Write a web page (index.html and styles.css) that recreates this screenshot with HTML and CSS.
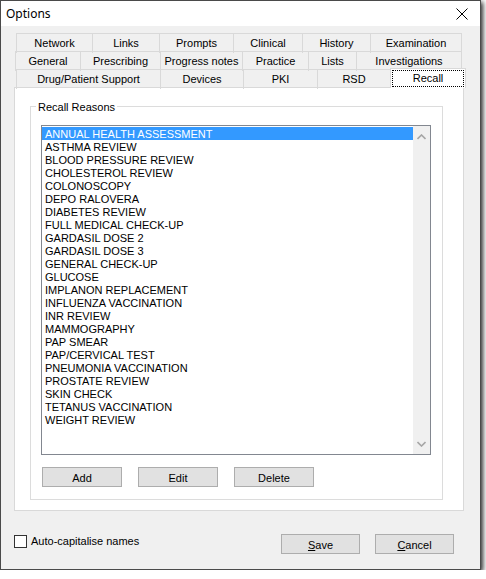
FILE: index.html
```html
<!DOCTYPE html>
<html lang="en">
<head>
    <meta charset="utf-8">
    <title>Options</title>
    <link rel="stylesheet" href="styles.css">
</head>
<body>
    <div class="window">
        <div class="title-bar">
            <span class="title">Options</span>
            <svg class="close" width="12" height="12" viewBox="0 0 12 12">
                <path d="M0.5 0.5 L11.5 11.5 M11.5 0.5 L0.5 11.5" stroke="#000" stroke-width="1"/>
            </svg>
        </div>
        <div class="dialog-body">
            <div class="tabs">
                <div class="tab-row row-1">
                    <div class="tab">Network</div>
                    <div class="tab">Links</div>
                    <div class="tab">Prompts</div>
                    <div class="tab">Clinical</div>
                    <div class="tab">History</div>
                    <div class="tab">Examination</div>
                </div>
                <div class="tab-row row-2">
                    <div class="tab">General</div>
                    <div class="tab">Prescribing</div>
                    <div class="tab">Progress notes</div>
                    <div class="tab">Practice</div>
                    <div class="tab">Lists</div>
                    <div class="tab">Investigations</div>
                </div>
                <div class="tab-row row-3">
                    <div class="tab">Drug/Patient Support</div>
                    <div class="tab">Devices</div>
                    <div class="tab">PKI</div>
                    <div class="tab">RSD</div>
                    <div class="tab active"><span class="focus">Recall</span></div>
                </div>
                <div class="tab-panel">
                    <div class="group">
                        <div class="group-title">Recall Reasons</div>
                        <div class="listbox">
                            <ul class="items">
                                <li class="selected">ANNUAL HEALTH ASSESSMENT</li>
                                <li>ASTHMA REVIEW</li>
                                <li>BLOOD PRESSURE REVIEW</li>
                                <li>CHOLESTEROL REVIEW</li>
                                <li>COLONOSCOPY</li>
                                <li>DEPO RALOVERA</li>
                                <li>DIABETES REVIEW</li>
                                <li>FULL MEDICAL CHECK-UP</li>
                                <li>GARDASIL DOSE 2</li>
                                <li>GARDASIL DOSE 3</li>
                                <li>GENERAL CHECK-UP</li>
                                <li>GLUCOSE</li>
                                <li>IMPLANON REPLACEMENT</li>
                                <li>INFLUENZA VACCINATION</li>
                                <li>INR REVIEW</li>
                                <li>MAMMOGRAPHY</li>
                                <li>PAP SMEAR</li>
                                <li>PAP/CERVICAL TEST</li>
                                <li>PNEUMONIA VACCINATION</li>
                                <li>PROSTATE REVIEW</li>
                                <li>SKIN CHECK</li>
                                <li>TETANUS VACCINATION</li>
                                <li>WEIGHT REVIEW</li>
                            </ul>
                            <div class="scrollbar">
                                <svg width="9" height="6" viewBox="0 0 9 6">
                                    <path d="M0.5 5 L4.5 1 L8.5 5" fill="none" stroke="#a6a6a6" stroke-width="1.6"/>
                                </svg>
                                <svg width="9" height="6" viewBox="0 0 9 6">
                                    <path d="M0.5 1 L4.5 5 L8.5 1" fill="none" stroke="#a6a6a6" stroke-width="1.6"/>
                                </svg>
                            </div>
                        </div>
                        <div class="list-buttons">
                            <button class="btn">Add</button>
                            <button class="btn">Edit</button>
                            <button class="btn">Delete</button>
                        </div>
                    </div>
                </div>
            </div>
            <div class="footer">
                <label class="check">
                    <span class="box"></span>
                    Auto-capitalise names
                </label>
                <div class="dialog-buttons">
                    <button class="btn wide"><u>S</u>ave</button>
                    <button class="btn wide"><u>C</u>ancel</button>
                </div>
            </div>
        </div>
    </div>
</body>
</html>
```

FILE: styles.css
```css
body {
    margin: 0;
    background-color: #ffffff;
    font-family: "Liberation Sans", Arial, sans-serif;
    font-size: 11px;
    color: #000000;
}
.window {
    width: 479px;
    height: 568px;
    border: 1px solid #4a4a4a;
    background-color: #f0f0f0;
    box-shadow: 2px 2px 5px rgba(0, 0, 0, 0.85);
    display: flex;
    flex-direction: column;
}
.title-bar {
    height: 25px;
    background-color: #ffffff;
    display: flex;
    align-items: center;
    justify-content: space-between;
    padding: 0 12px 0 5px;
}
.title {
    font-family: "Noto Sans", sans-serif;
    font-size: 12px;
}
.close {
    display: block;
}
.dialog-body {
    flex: 1;
    padding-top: 7px;
}
.tabs {
    margin-left: 13px;
    width: 450px;
}
.tab-row {
    display: grid;
    height: 18px;
    padding-left: 2px;
}
.row-1 {
    grid-template-columns: 76px 67px 74px 69px 68px 92px;
}
.row-2 {
    padding-left: 1px;
    grid-template-columns: 65px 80px 82px 66px 48px 106px;
}
.row-3 {
    grid-template-columns: 144px 83px 74px 73px 76px;
}
.tab {
    border: 1px solid #d9d9d9;
    border-bottom: none;
    border-right: none;
    text-align: center;
    line-height: 19px;
    white-space: nowrap;
}
.tab:last-child {
    border-right: 1px solid #d9d9d9;
}
.tab.active {
    position: relative;
    z-index: 1;
    background-color: #ffffff;
    height: 20px;
    margin-top: -1px;
    padding-top: 1px;
    box-sizing: border-box;
}
.focus {
    display: block;
    margin: 0 1px;
    height: 15px;
    line-height: 15px;
    border: 1px dotted #000000;
}
.tab-panel {
    height: 422px;
    border: 1px solid #d9d9d9;
    background-color: #ffffff;
}
.group {
    margin: 18px 0 0 15px;
    width: 411px;
    height: 392px;
    border: 1px solid #dcdcdc;
}
.group-title {
    width: fit-content;
    margin: -7px 0 0 5px;
    padding: 0 2px;
    height: 13px;
    line-height: 15px;
    background-color: #ffffff;
}
.listbox {
    margin: 12px 0 0 10px;
    width: 388px;
    height: 328px;
    border: 1px solid #828790;
    display: flex;
}
.items {
    list-style: none;
    margin: 0;
    padding: 1px 0 0;
    flex: 1;
}
.items li {
    height: 13px;
    line-height: 15px;
    padding-left: 3px;
    white-space: nowrap;
}
.items li.selected {
    background-color: #3399ff;
    color: #ffffff;
}
.scrollbar {
    width: 17px;
    background-color: #f0f0f0;
    display: flex;
    flex-direction: column;
    justify-content: space-between;
    align-items: center;
    padding: 8px 0 7px;
    box-sizing: border-box;
}
.scrollbar svg {
    display: block;
}
.list-buttons {
    display: flex;
    gap: 16px;
    margin: 12px 0 0 11px;
}
.btn {
    width: 80px;
    height: 20px;
    padding: 2px 0 0;
    background-color: #e1e1e1;
    border: 1px solid #adadad;
    font-family: "Liberation Sans", Arial, sans-serif;
    font-size: 11px;
    color: #000000;
}
.btn.wide {
    width: 79px;
}
.footer {
    display: flex;
    align-items: flex-start;
    justify-content: space-between;
    margin: 23px 26px 0 13px;
}
.check {
    display: flex;
    align-items: center;
    gap: 4px;
    margin-top: 1px;
    line-height: 13px;
}
.box {
    width: 11px;
    height: 11px;
    border: 1px solid #333333;
    background-color: #ffffff;
}
.dialog-buttons {
    display: flex;
    gap: 15px;
}
```
